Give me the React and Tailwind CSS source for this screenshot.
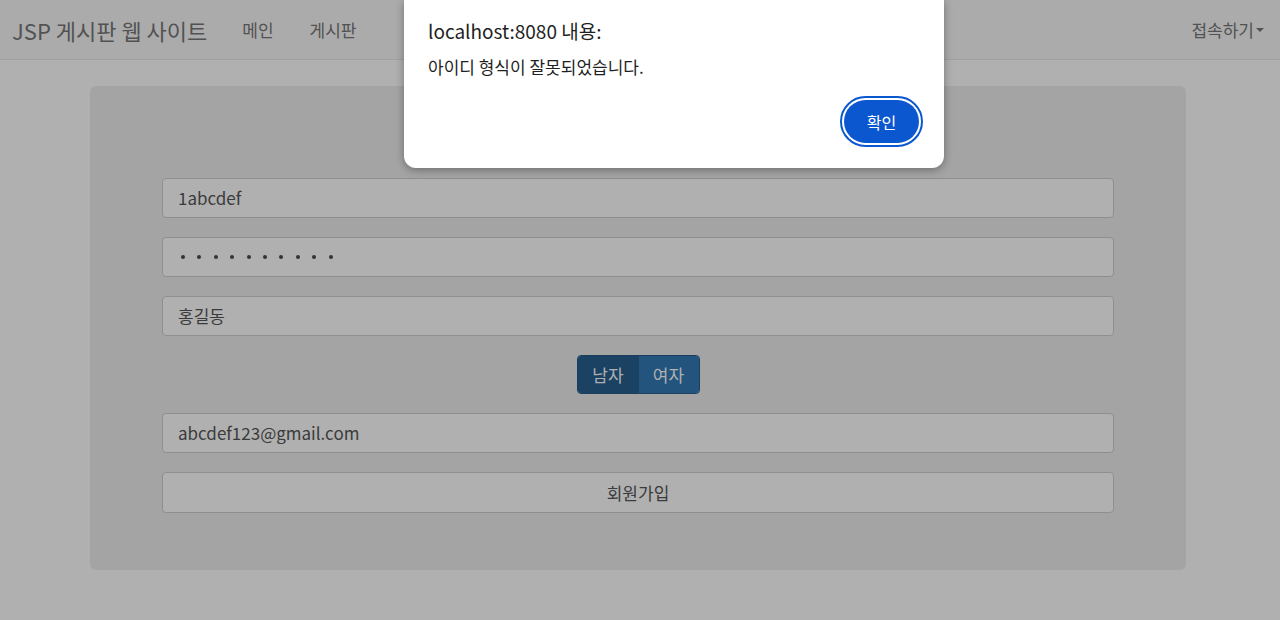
export default function App() {
  const font = { fontFamily: '"Noto Sans CJK KR", "Noto Sans", sans-serif' };
  return (
    <div className="relative w-[1280px] h-[620px] overflow-hidden bg-[#b0b0b0]" style={font}>
      {/* navbar */}
      <div className="h-[60px] bg-[#ababab] border-b border-[#a0a0a0] flex items-center px-[12px]">
        <div className="text-[22px] text-[#525252] leading-none">JSP 게시판 웹 사이트</div>
        <div className="ml-[35px] text-[17px] text-[#525252]">메인</div>
        <div className="ml-[36px] text-[17px] text-[#525252]">게시판</div>
        <div className="ml-auto mr-[4px] flex items-center text-[17px] text-[#525252]">
          접속하기
          <span className="ml-[2px] inline-block w-0 h-0 border-l-[4px] border-r-[4px] border-t-[4px] border-l-transparent border-r-transparent border-t-[#525252]" />
        </div>
      </div>
      {/* jumbotron */}
      <div className="mt-[26px] mx-[90px] w-[1096px] h-[484px] rounded-[6px] bg-[#a4a4a4] pt-[92px] px-[72px]">
        <div className="flex flex-col gap-[19px]">
          <div className="h-[40px] rounded-[4px] border border-[#8f8f8f] bg-[#b0b0b0] flex items-center pl-[15px] text-[17px] text-[#3b3b3b]">1abcdef</div>
          <div className="h-[40px] rounded-[4px] border border-[#8f8f8f] bg-[#b0b0b0] flex items-center pl-[18px] gap-[12.4px]">
            {Array.from({ length: 10 }).map((_, i) => (
              <span key={i} className="w-[4px] h-[4px] rounded-full bg-[#333]" />
            ))}
          </div>
          <div className="h-[40px] rounded-[4px] border border-[#8f8f8f] bg-[#b0b0b0] flex items-center pl-[15px] text-[17px] text-[#3b3b3b]">홍길동</div>
          <div className="flex justify-center">
            <div className="flex h-[39px] rounded-[4px] overflow-hidden border border-[#1a3f5f]">
              <div className="w-[61px] bg-[#1c4263] flex items-center justify-center text-[17px] text-[#b0b0b0]">남자</div>
              <div className="w-[60px] bg-[#23547e] flex items-center justify-center text-[17px] text-[#b0b0b0]">여자</div>
            </div>
          </div>
          <div className="h-[40px] rounded-[4px] border border-[#8f8f8f] bg-[#b0b0b0] flex items-center pl-[15px] text-[17px] text-[#3b3b3b]">abcdef123@gmail.com</div>
          <div className="h-[41px] rounded-[4px] border border-[#8f8f8f] bg-[#b0b0b0] flex items-center justify-center text-[17px] text-[#3b3b3b]">회원가입</div>
        </div>
      </div>
      {/* dialog */}
      <div className="absolute left-[404px] top-0 w-[540px] h-[168px] bg-white rounded-b-[12px] shadow-[0_2px_8px_rgba(0,0,0,0.35)] px-[24px]">
        <div className="pt-[17px] text-[19px] text-[#1f1f1f]">localhost:8080 내용:</div>
        <div className="mt-[8px] text-[17px] text-[#1f1f1f]">아이디 형식이 잘못되었습니다.</div>
        <div className="flex justify-end mt-[17px] mr-[-3px]">
          <div className="rounded-full border-[2px] border-[#0b57d0] p-[2px]">
            <div className="w-[75px] h-[43px] rounded-full bg-[#0b57d0] flex items-center justify-center text-[16px] text-white">확인</div>
          </div>
        </div>
      </div>
    </div>
  );
}
